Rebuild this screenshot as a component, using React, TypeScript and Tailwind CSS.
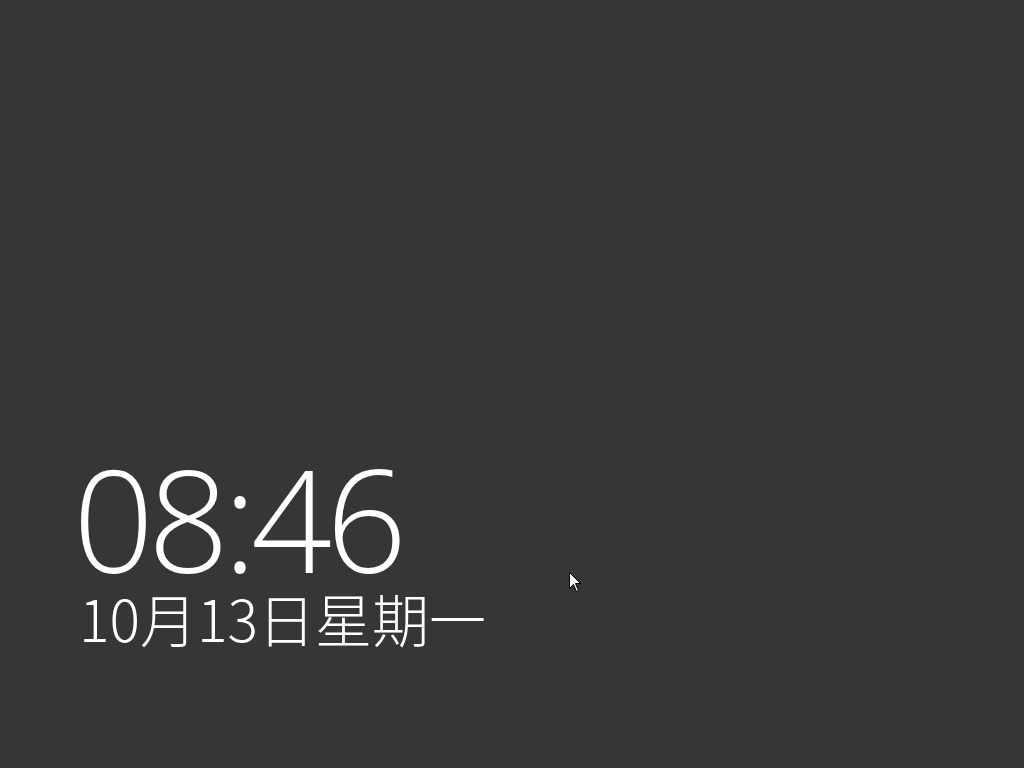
import React from "react";

export default function App() {
  return (
    <div className="relative w-[1024px] h-[768px] bg-[#363636] overflow-hidden">
      <div className="flex flex-col pl-[73px] pt-[455px]">
        <div
          className="text-white text-[142px] leading-[0.9] font-light tracking-[-6px]"
          style={{ fontFamily: '"Open Sans", "Noto Sans", sans-serif' }}
        >
          08:46
        </div>
        <div
          className="text-white text-[57px] leading-[1] font-light pl-[6px] mt-[6px]"
          style={{ fontFamily: '"Noto Sans CJK SC", "Noto Sans", sans-serif' }}
        >
          10月13日星期一
        </div>
      </div>
      <svg
        className="absolute left-[569px] top-[572px]"
        width="13"
        height="21"
        viewBox="0 0 13 21"
      >
        <path
          d="M0.5 0.5 L0.5 16.5 L4.5 12.5 L7.5 19.5 L9.5 18.5 L6.5 11.5 L11.5 11.5 Z"
          fill="white"
          stroke="black"
          strokeWidth="1"
        />
      </svg>
    </div>
  );
}
